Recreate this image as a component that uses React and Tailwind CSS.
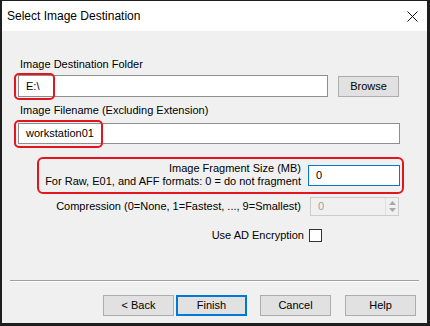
import React from "react";

const ui = { fontFamily: '"Liberation Sans", Arial, sans-serif' };
const title = { fontFamily: '"Liberation Sans", Arial, sans-serif' };

function Btn({ children, focus }) {
  return (
    <div
      className={
        "h-[21px] w-[71px] flex items-center justify-center text-[11px] text-black bg-[#e1e1e1] " +
        (focus ? "border-2 border-[#0078d7]" : "border border-[#adadad]")
      }
    >
      {children}
    </div>
  );
}

export default function App() {
  return (
    <div
      className="relative w-[430px] h-[326px] bg-[#f0f0f0] border-t border-l-2 border-r-[3px] border-b-[3px] border-[#1e1e1e] flex flex-col overflow-hidden"
      style={ui}
    >
      {/* title bar */}
      <div className="h-[30px] bg-white flex items-center justify-between pl-[5px] pr-[8px] shrink-0">
        <span className="text-[12px] text-black" style={title}>
          Select Image Destination
        </span>
        <svg width="11" height="11" viewBox="0 0 11 11" className="mr-[1px]">
          <path d="M0.5 0.5 L10.5 10.5 M10.5 0.5 L0.5 10.5" stroke="#111" strokeWidth="1" fill="none" />
        </svg>
      </div>

      {/* body */}
      <div className="flex flex-col pl-[16px] pt-[27px] text-[11px] text-black leading-[13px]">
        <div className="pl-[2px]">Image Destination Folder</div>
        <div className="flex items-center mt-[4px]">
          <div className="w-[310px] h-[22px] bg-white border border-[#8f8f8f] flex items-center pl-[7px]">E:\</div>
          <div className="ml-[10px]">
            <div className="h-[21px] w-[61px] flex items-center justify-center bg-[#e1e1e1] border border-[#adadad]">
              Browse
            </div>
          </div>
        </div>

        <div className="pl-[2px] mt-[7px]">Image Filename (Excluding Extension)</div>
        <div className="w-[382px] h-[21px] mt-[6px] bg-white border border-[#8f8f8f] flex items-center pl-[7px]">
          workstation01
        </div>

        <div className="w-[382px] flex items-center justify-end mt-[18px]">
          <div className="text-right">
            <div>Image Fragment Size (MB)</div>
            <div>For Raw, E01, and AFF formats: 0 = do not fragment</div>
          </div>
          <div className="ml-[7px] w-[92px] h-[21px] bg-white border border-[#0078d7] flex items-center pl-[7px]">0</div>
        </div>

        <div className="w-[382px] flex items-center justify-end mt-[9px]">
          <div>Compression (0=None, 1=Fastest, ..., 9=Smallest)</div>
          <div className="ml-[9px] mr-[1px] w-[89px] h-[19px] border border-[#cccccc] flex items-center justify-between pl-[7px] text-[#a0a0a0]">
            <span>0</span>
            <div className="w-[13px] h-full flex flex-col items-center justify-center gap-[3px] border-l border-[#e0e0e0]">
              <svg width="7" height="4" viewBox="0 0 7 4"><path d="M0 4 L3.5 0 L7 4 Z" fill="#a8a8a8" /></svg>
              <svg width="7" height="4" viewBox="0 0 7 4"><path d="M0 0 L3.5 4 L7 0 Z" fill="#a8a8a8" /></svg>
            </div>
          </div>
        </div>

        <div className="w-[382px] flex items-center justify-end mt-[13px] pr-[78px]">
          <div>Use AD Encryption</div>
          <div className="ml-[5px] w-[13px] h-[13px] bg-white border border-[#333333]" />
        </div>
      </div>

      <div className="mx-[8px] mt-[38px] h-[1px] bg-[#a0a0a0] border-b border-white box-content" />

      <div className="flex items-center mt-[13px] pl-[101px] text-[11px]">
        <Btn>&lt; Back</Btn>
        <div className="ml-[2px]">
          <Btn focus>Finish</Btn>
        </div>
        <div className="ml-[13px]">
          <Btn>Cancel</Btn>
        </div>
        <div className="ml-[14px]">
          <Btn>Help</Btn>
        </div>
      </div>

      {/* annotation boxes */}
      <div className="absolute left-[12px] top-[72px] w-[41px] h-[27px] border-2 border-[#e3161e] rounded-[5px]" />
      <div className="absolute left-[12px] top-[119px] w-[89px] h-[28px] border-2 border-[#e3161e] rounded-[5px]" />
      <div className="absolute left-[35px] top-[156px] w-[367px] h-[37px] border-2 border-[#e3161e] rounded-[6px]" />
    </div>
  );
}
